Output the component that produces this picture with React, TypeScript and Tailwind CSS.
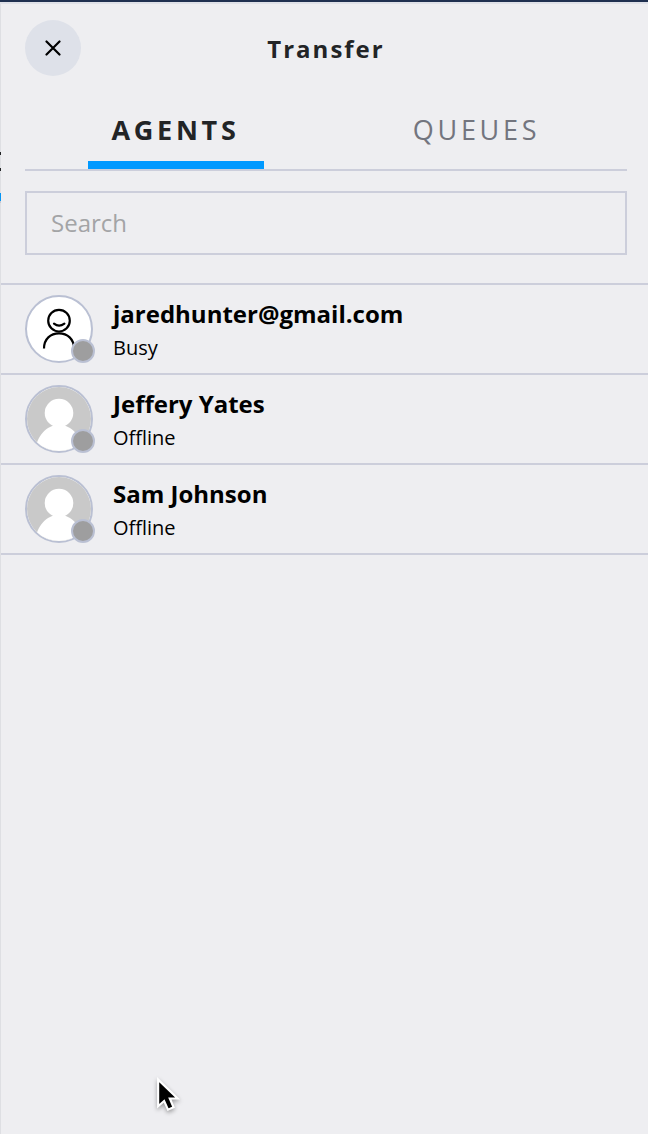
import React from "react";

type Agent = { name: string; status: string; outline?: boolean };

const agents: Agent[] = [
  { name: "jaredhunter@gmail.com", status: "Busy", outline: true },
  { name: "Jeffery Yates", status: "Offline" },
  { name: "Sam Johnson", status: "Offline" },
];

function OutlinePerson() {
  return (
    <svg viewBox="0 0 64 64" className="size-16" fill="none" stroke="#000" strokeWidth="2.2">
      <circle cx="32" cy="23.700" r="10.800" />
      <path d="M27 26.600q5 4.200 10.400 0" strokeLinecap="round" />
      <path d="M17 51.500C17 42 23.500 36.300 32 36.300S47 42 47 51.500" />
    </svg>
  );
}

function SolidPerson() {
  return (
    <svg viewBox="0 0 64 64" className="size-16">
      <rect width="64" height="64" fill="#c9c9c9" />
      <circle cx="32" cy="26" r="14.300" fill="#fff" />
      <path d="M8 64C10 49 19 38 32 38s22 11 24 26Z" fill="#fff" />
    </svg>
  );
}

function AgentRow({ agent }: { agent: Agent }) {
  return (
    <li className="flex h-[90px] items-center border-b-2 border-[#cccedb] pl-6">
      <div className="relative size-[68px] shrink-0">
        <div className="size-[68px] overflow-hidden rounded-full border-2 border-[#bac0d3] bg-white">
          {agent.outline ? <OutlinePerson /> : <SolidPerson />}
        </div>
        <span className="absolute -right-0.5 bottom-0 size-6 rounded-full border-2 border-[#bac0d3] bg-[#9e9e9f]" />
      </div>
      <div className="ml-5 pt-[3px] text-black">
        <div className="text-2xl leading-[34px] font-bold">{agent.name}</div>
        <div className="text-xl leading-[33px]">{agent.status}</div>
      </div>
    </li>
  );
}

export default function App() {
  return (
    <div className="relative flex h-[1134px] w-[648px] flex-col overflow-hidden bg-[#eeeef1] font-['Open_Sans','Noto_Sans',sans-serif]">
      <div className="h-0.5 shrink-0 bg-[#1f3050]" />
      <div className="h-0.5 shrink-0 bg-[#dfe1e8]" />
      <div className="flex flex-1">
        <div className="w-px shrink-0 bg-[#dedfe3] pt-[148px]">
          <div className="h-[3px] bg-[#222426]" />
          <div className="mt-[13px] h-[3px] bg-[#222426]" />
          <div className="mt-[22px] h-2 bg-[#0495f5]" />
          <div className="h-0.5 bg-[#c5c7d2]" />
        </div>
        <main className="min-w-0 flex-1">
          <header className="grid h-[92px] grid-cols-[56px_1fr_56px] items-start pt-4 pr-[21px] pl-6">
            <button aria-label="Close" className="flex size-14 items-center justify-center rounded-full bg-[#dee1e9]">
              <svg viewBox="0 0 16 16" className="size-4" stroke="#000" strokeWidth="2.200" strokeLinecap="round">
                <path d="M1.500 1.500l13 13M14.500 1.500l-13 13" />
              </svg>
            </button>
            <h1 className="pt-[13px] text-center text-2xl leading-8 font-bold tracking-[2px] text-[#222426]">Transfer</h1>
          </header>
          <nav className="mr-[21px] ml-6 grid h-[75px] grid-cols-2 justify-items-center border-b-2 border-[#cccedb] text-[27px] leading-[38px]">
            <button className="flex h-[73px] w-44 justify-center border-b-8 border-[#0099ff] pt-[15px] font-bold tracking-[3.700px] text-[#222426]">AGENTS</button>
            <button className="flex h-[73px] justify-center pt-[15px] tracking-[3.700px] text-[#73757e]">QUEUES</button>
          </nav>
          <div className="pt-5 pr-[21px] pb-7 pl-6">
            <input
              placeholder="Search"
              className="block h-16 w-full border-2 border-[#cccedb] bg-transparent px-6 pb-0.5 text-2xl outline-none placeholder:text-[#a3a4a6]"
            />
          </div>
          <ul className="border-t-2 border-[#cccedb]">
            {agents.map((a) => (
              <AgentRow key={a.name} agent={a} />
            ))}
          </ul>
        </main>
      </div>
      <svg viewBox="0 0 28 42" className="absolute top-[1077px] left-[156px] h-[37px] w-6 drop-shadow-[0_2px_2px_rgba(0,0,0,0.35)]">
        <path d="M2.500 2.500v31l7-6.200 4.500 10.200 6.500-2.800-4.400-10.200h9.200Z" fill="#000" stroke="#fff" strokeWidth="2.500" />
      </svg>
    </div>
  );
}
